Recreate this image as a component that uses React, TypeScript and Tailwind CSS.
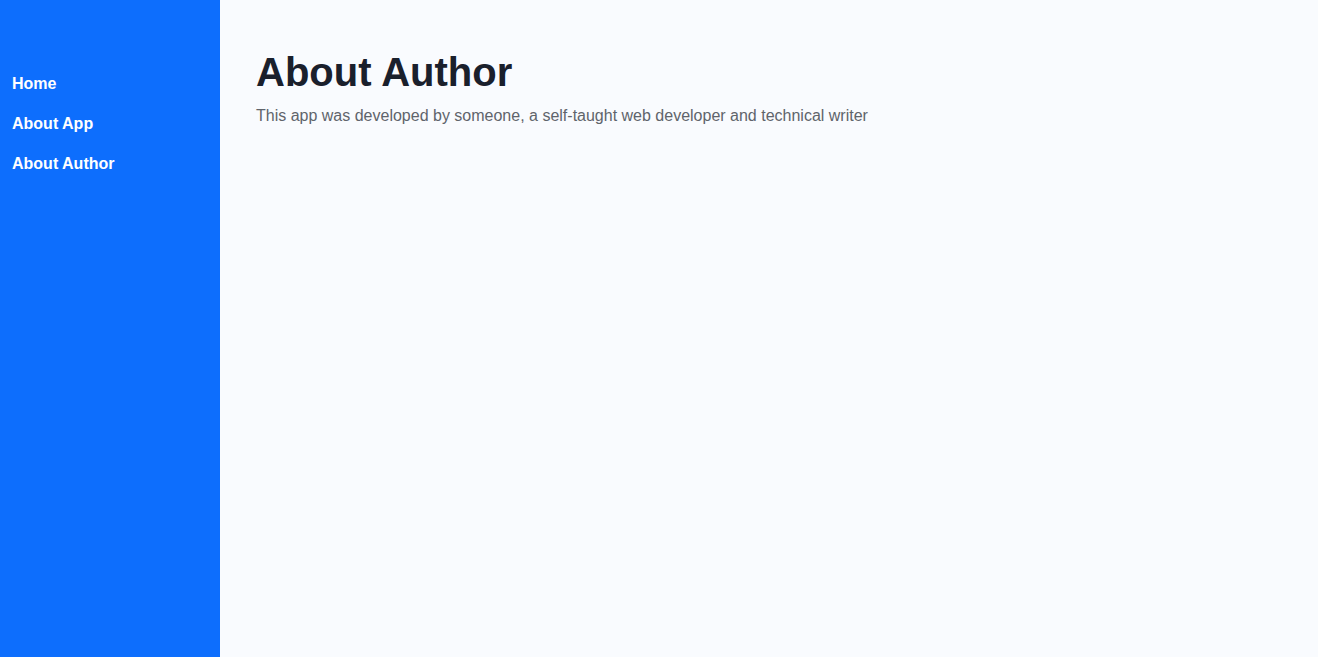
export default function App() {
  const links = ["Home", "About App", "About Author"];

  return (
    <div className="flex min-h-[657px] font-['Liberation_Sans',Arial,sans-serif]">
      <aside className="w-[220px] shrink-0 bg-[#0d6efd] pt-[72px]">
        <nav className="flex flex-col gap-4">
          {links.map((label) => (
            <a key={label} href="#" className="px-3 text-base leading-6 font-bold text-white">
              {label}
            </a>
          ))}
        </nav>
      </aside>
      <main className="flex-1 bg-[#f9fbfe] px-9 pt-[48px]">
        <h1 className="text-[40px] leading-12 font-bold text-[#1a202c]">About Author</h1>
        <p className="mt-2 text-base text-[#5f646b]">
          This app was developed by someone, a self-taught web developer and technical writer
        </p>
      </main>
    </div>
  );
}
